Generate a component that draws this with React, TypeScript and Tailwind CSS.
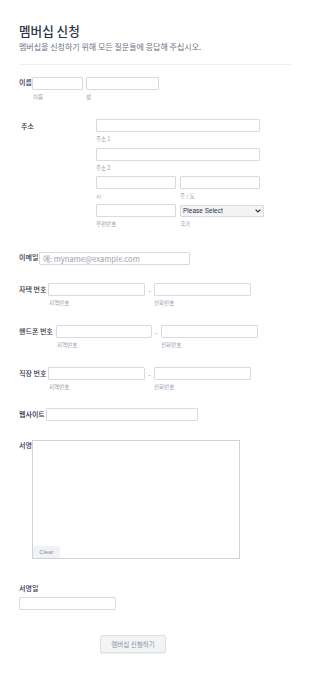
import React from 'react';

const font = { fontFamily: '"Noto Sans CJK KR", "Noto Sans", sans-serif' };

function Box({ className = '', placeholder }: { className?: string; placeholder?: string }) {
  return (
    <div
      className={`h-[13px] border border-[#d8dadf] bg-white rounded-[1px] text-[7.6px] leading-[11px] px-[3px] text-[#9ca1ab] whitespace-nowrap ${className}`}
    >
      {placeholder}
    </div>
  );
}

function Sub({ children, className = '' }: { children: React.ReactNode; className?: string }) {
  return <div className={`text-[5.5px] leading-[7px] mt-[4px] text-[#959cab] ${className}`}>{children}</div>;
}

function Label({ children, className = '' }: { children: React.ReactNode; className?: string }) {
  return (
    <div className={`text-[7px] leading-[9px] font-medium text-[#2c3345] shrink-0 ${className}`}>{children}</div>
  );
}

function PhoneRow({ label, top, labelW, left = 'w-[97px]', right = 'w-[97px]' }: { label: string; top: string; labelW: string; left?: string; right?: string }) {
  return (
    <div className={`flex items-start ${top}`}>
      <Label className={`${labelW} mt-[2px]`}>{label}</Label>
      <div>
        <Box className={left} />
        <Sub className="pl-[1px]">지역번호</Sub>
      </div>
      <div className="w-[9px] text-center text-[7px] leading-[9px] mt-[3px] text-[#8a92a4]">-</div>
      <div>
        <Box className={right} />
        <Sub>전화번호</Sub>
      </div>
    </div>
  );
}

export default function App() {
  return (
    <div className="w-[310px] h-[674px] bg-white px-[19px] overflow-hidden" style={font}>
      <div className="pt-[23px] text-[12.6px] leading-[15px] font-medium text-[#2c3345]">멤버십 신청</div>
      <div className="mt-[4px] text-[8px] leading-[10px] text-[#6b7486]">
        멤버십을 신청하기 위해 모든 질문들에 응답해 주십시오.
      </div>
      <div className="mt-[12px] h-px w-[272px] bg-[#eceef2]" />

      {/* 이름 */}
      <div className="flex items-start mt-[12px]">
        <Label className="w-[13px] mt-[1px]">이름</Label>
        <div>
          <Box className="w-[51px]" />
          <Sub className="pl-[1px]">이름</Sub>
        </div>
        <div className="ml-[3px]">
          <Box className="w-[73px]" />
          <Sub>성</Sub>
        </div>
      </div>

      {/* 주소 */}
      <div className="flex items-start mt-[18px]">
        <Label className="w-[77px] pl-[2px] mt-[3px]">주소</Label>
        <div className="flex flex-col">
          <Box className="w-[164px]" />
          <Sub>주소 1</Sub>
          <Box className="w-[164px] mt-[5px]" />
          <Sub>주소 2</Sub>
          <div className="flex gap-[4px] mt-[4px]">
            <div>
              <Box className="w-[80px]" />
              <Sub>시</Sub>
            </div>
            <div>
              <Box className="w-[80px]" />
              <Sub>주 / 도</Sub>
            </div>
          </div>
          <div className="flex gap-[4px] mt-[4px]">
            <div>
              <Box className="w-[80px]" />
              <Sub>우편번호</Sub>
            </div>
            <div>
              <div className="w-[84px] h-[12px] mt-[1px] border border-[#d8dadf] bg-[#f3f4f6] rounded-[1px] flex items-center justify-between px-[2px] text-[6.5px] text-[#2c3345]" style={{ fontFamily: '"Liberation Sans", sans-serif' }}>
                <span>Please Select</span>
                <svg width="6" height="4" viewBox="0 0 6 4"><path d="M0.6 0.6 L3 3 L5.4 0.6" stroke="#2c3345" strokeWidth="1.2" fill="none" /></svg>
              </div>
              <Sub className="mt-[3px]">국가</Sub>
            </div>
          </div>
        </div>
      </div>

      {/* 이메일 */}
      <div className="flex items-start mt-[24px]">
        <Label className="w-[20px] mt-[1px]">이메일</Label>
        <Box className="w-[151px]" placeholder="예: myname@example.com" />
      </div>

      <PhoneRow label="자택 번호" top="mt-[18px]" labelW="w-[29px]" />
      <PhoneRow label="핸드폰 번호" top="mt-[18px]" labelW="w-[37px]" left="w-[96px]" />
      <PhoneRow label="직장 번호" top="mt-[18px]" labelW="w-[29px]" />

      {/* 웹사이트 */}
      <div className="flex items-start mt-[17px]">
        <Label className="w-[27px] mt-[2px]">웹사이트</Label>
        <Box className="w-[152px]" />
      </div>

      {/* 서명 */}
      <div className="flex items-start mt-[19px]">
        <Label className="w-[13px] mt-[1px]">서명</Label>
        <div className="w-[208px] h-[119px] border border-[#cfd2d8] bg-white flex flex-col justify-end">
          <div className="w-[27px] h-[12px] bg-[#f1f2f4] text-[6px] leading-[12px] text-center text-[#8a92a4] rounded-[1px]" style={{ fontFamily: '"Liberation Sans", sans-serif' }}>
            Clear
          </div>
        </div>
      </div>

      {/* 서명일 */}
      <Label className="mt-[25px]">서명일</Label>
      <Box className="w-[97px] mt-[4px]" />

      <div className="flex mt-[25px] pl-[81px]">
        <div className="w-[66px] h-[18px] border border-[#dcdfe4] bg-[#f3f4f6] rounded-[2px] text-[6.5px] leading-[16px] text-center text-[#8a92a4] shadow-[0_1px_1px_rgba(0,0,0,0.06)]">
          멤버십 신청하기
        </div>
      </div>
    </div>
  );
}
